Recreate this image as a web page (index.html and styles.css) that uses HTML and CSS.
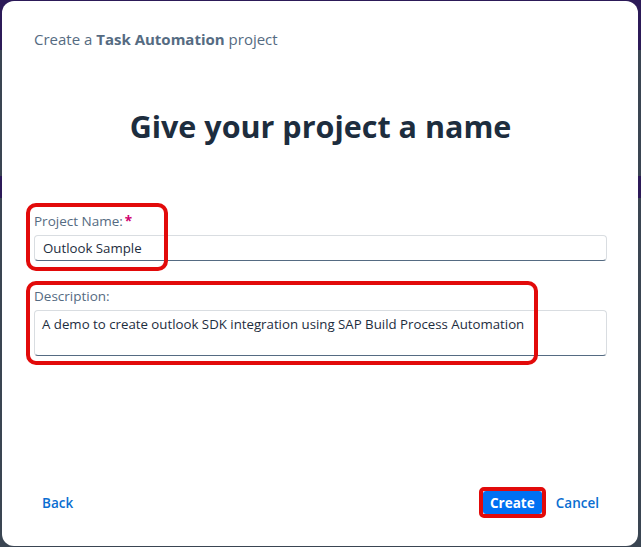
FILE: index.html
```html
<!DOCTYPE html>
<html lang="en">
<head>
<meta charset="utf-8">
<title>Create a Task Automation project</title>
<link rel="stylesheet" href="styles.css">
</head>
<body>
<div class="dialog">
  <header class="dialog-header">Create a <strong>Task Automation</strong> project</header>
  <h1 class="dialog-title">Give your project a name</h1>
  <form class="form">
    <div class="field field-name">
      <label class="label" for="pname">Project Name:<span class="req">*</span></label>
      <input class="input" id="pname" type="text" value="Outlook Sample">
      <span class="mark mark-name"></span>
    </div>
    <div class="field field-desc">
      <label class="label" for="pdesc">Description:</label>
      <textarea class="input textarea" id="pdesc">A demo to create outlook SDK integration using SAP Build Process Automation</textarea>
      <span class="mark mark-desc"></span>
    </div>
  </form>
  <footer class="dialog-footer">
    <button class="link-btn" type="button">Back</button>
    <div class="actions">
      <span class="create-wrap">
        <button class="primary-btn" type="button">Create</button>
      </span>
      <button class="link-btn" type="button">Cancel</button>
    </div>
  </footer>
</div>
</body>
</html>
```

FILE: styles.css
```css
html, body {
  margin: 0;
  padding: 0;
  height: 547px;
  overflow: hidden;
}

body {
  font-family: "Open Sans", "Noto Sans", sans-serif;
  background: linear-gradient(to bottom,
    #2c1a58 0, #2c1a58 50px,
    #3a4552 50px, #3a4552 176px,
    #2c1a58 176px, #2c1a58 198px,
    #3a4552 198px);
  padding: 1px 3px 1px 2px;
  box-sizing: border-box;
}

.dialog {
  height: 545px;
  background: #fff;
  border-radius: 12px;
  box-sizing: border-box;
  padding: 0 31px 0 32px;
  display: flex;
  flex-direction: column;
}

.dialog-header {
  padding-top: 28px;
  font-size: 15px;
  line-height: 20px;
  color: #556b82;
}

.dialog-header strong {
  font-weight: 700;
}

.dialog-title {
  margin: 58px 0 0;
  text-align: center;
  font-size: 30.5px;
  line-height: 38px;
  font-weight: 700;
  color: #1d2d3e;
}

.form {
  margin-top: 67px;
  display: flex;
  flex-direction: column;
  gap: 26px;
}

.field {
  position: relative;
  display: flex;
  flex-direction: column;
  gap: 5px;
}

.label {
  font-size: 13.5px;
  line-height: 18px;
  color: #556b82;
}

.req {
  color: #d0006f;
  font-weight: 700;
  margin-left: 2px;
}

.input {
  font-family: inherit;
  font-size: 13.25px;
  color: #1d2d3e;
  height: 26px;
  box-sizing: border-box;
  padding: 0 8px;
  border: 1px solid #d9dde1;
  border-bottom-color: #556b82;
  border-radius: 4px;
  background: #fff;
  outline: none;
  margin: 0;
}

.textarea {
  height: 46px;
  padding: 4px 7px;
  resize: none;
  line-height: 18px;
  overflow: hidden;
}

.mark {
  position: absolute;
  border: 4px solid #e20a0a;
  border-radius: 10px;
  pointer-events: none;
}

.mark-name {
  left: -8px;
  top: -9px;
  width: 134px;
  height: 60px;
}

.mark-desc {
  left: -8px;
  top: -6px;
  width: 504px;
  height: 76px;
}

.dialog-footer {
  margin-top: auto;
  padding: 0 0 28px 0;
  display: flex;
  align-items: center;
  justify-content: space-between;
}

.actions {
  display: flex;
  align-items: center;
  gap: 2px;
}

.link-btn {
  font-family: inherit;
  font-size: 13.5px;
  font-weight: 600;
  color: #0a6ed1;
  background: none;
  border: none;
  padding: 0 8px;
  height: 24px;
  cursor: pointer;
}

.create-wrap {
  display: inline-flex;
  border: 4px solid #e20a0a;
  border-radius: 5px;
}

.primary-btn {
  font-family: inherit;
  font-size: 13.5px;
  font-weight: 700;
  color: #fff;
  background: #0070f2;
  border: none;
  border-radius: 3px;
  height: 23px;
  width: 59px;
  padding: 0;
  cursor: pointer;
}
```
